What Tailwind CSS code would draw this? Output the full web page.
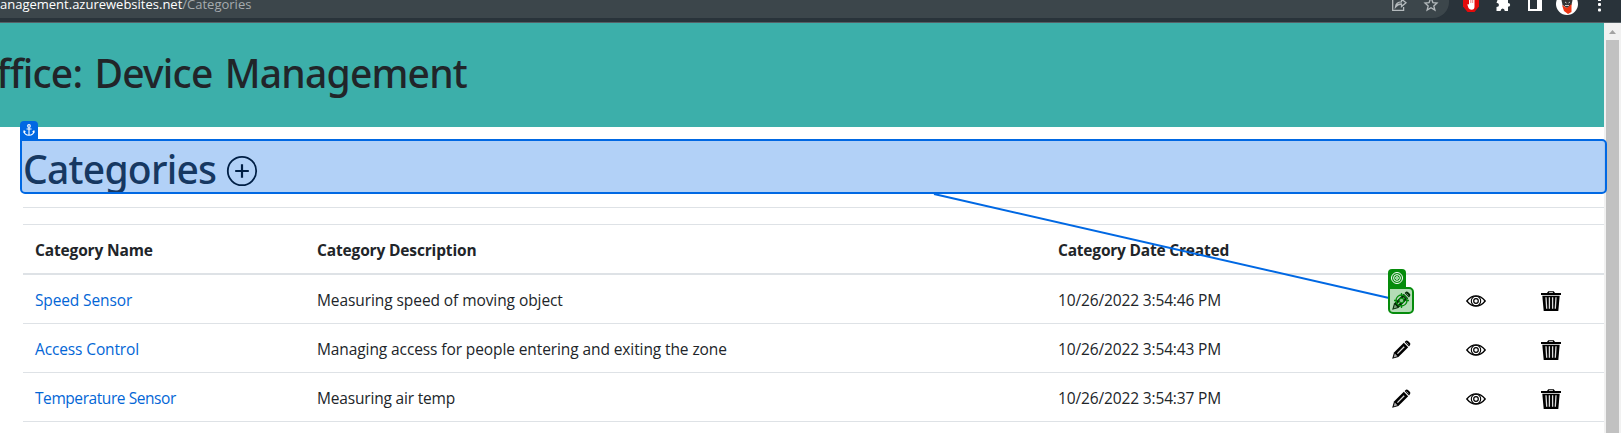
<!DOCTYPE html>
<html lang="en">
<head>
<meta charset="utf-8">
<title>Categories</title>
<script src="https://cdn.jsdelivr.net/npm/@tailwindcss/browser@4"></script>
</head>
<body class="relative h-[433px] w-[1621px] overflow-hidden bg-white font-['Open_Sans',sans-serif] text-[15.5px] leading-6 text-[#212529]">

<svg class="hidden">
  <symbol id="pencil" viewBox="0 0 20 20">
    <path d="M1.2 18.8 3 12.6 12.8 2.8 17.2 7.2 7.4 17Z" fill="#000"/>
    <path d="M13.6 2 15 .8Q16 .2 17 1L19 3Q19.8 4 19 5L18 6.400Z" fill="#000"/>
    <path d="M2.6 17.400 3.800 13.500 6.500 16.200Z" fill="#aaa"/>
    <path d="M6.400 13.600 13.200 6.800" stroke="#ddd" stroke-width="1.300"/>
    <path d="M15.400 2.500 17.500 4.600" stroke="#999" stroke-width="1"/>
  </symbol>
  <symbol id="eye" viewBox="0 0 20 20">
    <g fill="none" stroke="#000">
      <path d="M.8 10Q5 4.800 10 4.800T19.200 10Q15 15.200 10 15.200T.8 10Z" stroke-width="1.300"/>
      <circle cx="10" cy="10" r="4.700" stroke-width="1.100"/>
      <circle cx="10" cy="10" r="2.300" stroke-width="1.200"/>
    </g>
  </symbol>
  <symbol id="trash" viewBox="0 0 20 20">
    <path d="M0 2H6L7.200.2H12.800L14 2H20V4H0Z" fill="#000"/>
    <path d="M7.800 2 8.300 1.300H11.700L12.200 2Z" fill="#fff"/>
    <path d="M1.300 4.800H18.700L17.300 20H2.700Z" fill="#000"/>
    <path d="M5 6.200 5.700 17.800M8.400 6.200V17.800M11.600 6.200V17.800M15 6.200 14.300 17.800" stroke="#ddd" stroke-width="1.300"/>
  </symbol>
</svg>

<!-- browser toolbar -->
<header class="flex h-[23px] items-start border-b border-[#566066] bg-[#29333a]">
  <div class="flex h-[18px] w-[1449px] rounded-br-[16px] bg-[#3c464b]">
    <div class="-mt-[5px] whitespace-nowrap text-[13px] leading-[18px] text-white">anagement.azurewebsites.net<span class="text-[#a5abae]">/Categories</span></div>
    <svg class="ml-auto h-[18px] w-[57px] shrink-0" viewBox="1392 0 57 18" fill="none" stroke="#b4babd" stroke-width="1.300">
      <path d="M1392.700 0V10.400H1403.600V7M1395.500 7Q1396 2 1401.500 1.800V-1L1406 2.800 1401.500 6.500V4Q1398 3.800 1395.500 7Z"/>
      <path d="M1431-2.500 1432.900 2.600 1437 3 1433.800 5.900 1434.900 10.100 1431 7.800 1427.100 10.100 1428.200 5.900 1425 3 1429.100 2.600Z"/>
    </svg>
  </div>
  <svg class="h-[22px] w-[172px]" viewBox="1449 0 172 22">
    <path d="M1463 0H1479V6.500L1474.500 12H1467.500L1463 6.500Z" fill="#e30b0b"/>
    <path d="M1467.300 4.500 1468.500 4 1469 5V0H1474.500V6.500Q1474.500 9.800 1471.500 9.800 1469.500 9.800 1468.500 8Z" fill="#fff"/>
    <path d="M1470.800 0V3M1472.700 0V3" stroke="#e30b0b" stroke-width=".5"/>
    <path d="M1497.500 0H1508V3Q1510.200 3.200 1510.200 5T1508 6.800V11H1504.800Q1504.500 8.500 1502.700 8.500T1500.500 11H1496.500V7Q1499 6.800 1499 5T1496.500 2.700Z" fill="#fff"/>
    <path d="M1528 0H1542V11H1528ZM1530 0V9H1537V0Z" fill="#fff" fill-rule="evenodd"/>
    <circle cx="1567" cy="4" r="11" fill="#fff"/>
    <path d="M1561.500 0H1572.500L1571.500 5 1567 8 1562.500 5Z" fill="#333"/>
    <path d="M1565 2 1566.500 3M1570 2 1568.500 3M1565 5.500H1569" stroke="#ccc" stroke-width="1"/>
    <path d="M1562 5 1567 8 1571.500 4 1571.500 12 1568 14 1564 11Z" fill="#ec3512"/>
    <g fill="#fff"><path d="M1598 0h3v1h-3z"/><rect x="1598" y="3" width="3" height="3" rx="1"/><rect x="1598" y="8.500" width="3" height="3" rx="1"/></g>
  </svg>
</header>

<div class="flex h-[410px]">
  <main class="w-[1604px] shrink-0">
    <div class="h-[104px] overflow-hidden bg-[#3cafaa]">
      <div class="flex h-[100px] w-[467px] items-center justify-end whitespace-nowrap font-['Noto_Sans',sans-serif] text-[39px] font-medium tracking-[-0.8px] [word-spacing:3px]">Office: Device Management</div>
    </div>

    <div class="pl-[23px]">
      <h1 class="mt-3 flex h-[55px] items-center font-['Noto_Sans',sans-serif] text-[39px] font-medium tracking-[-0.75px]">
        <span class="w-[203px] pt-[5px]">Categories</span>
        <svg class="mt-[9px] size-8" viewBox="0 0 32 32" fill="none" stroke="#000"><circle cx="16" cy="16" r="14.200" stroke-width="1.800"/><path d="M9.200 16H22.800M16 9.200V22.800" stroke-width="2.200"/></svg>
      </h1>
      <hr class="mt-[13px] border-[#dee2e6]">
      <div class="mt-4 border-t border-[#dee2e6]">
        <div class="grid h-[50px] grid-cols-[282px_741px_333px_75px_75px_1fr] items-center border-b-2 border-[#dee2e6] pl-3 font-bold tracking-[-0.15px] [&>:not(svg)]:pt-px">
          <div>Category Name</div><div>Category Description</div><div class="tracking-[-0.2px]">Category Date Created</div>
        </div>
        <div class="grid h-[49px] grid-cols-[282px_741px_333px_75px_75px_1fr] items-center border-b border-[#dee2e6] pl-3 [&>:not(svg)]:pt-px">
          <a class="tracking-[-0.13px] text-[#0366d6]">Speed Sensor</a><div class="tracking-[-0.08px]">Measuring speed of moving object</div><div class="tracking-[-0.14px]">10/26/2022 3:54:46 PM</div>
          <svg class="mt-1 size-5"><use href="#pencil"/></svg><svg class="mt-1 size-5"><use href="#eye"/></svg><svg class="mt-1 size-5"><use href="#trash"/></svg>
        </div>
        <div class="grid h-[49px] grid-cols-[282px_741px_333px_75px_75px_1fr] items-center border-b border-[#dee2e6] pl-3 [&>:not(svg)]:pt-px">
          <a class="tracking-[-0.13px] text-[#0366d6]">Access Control</a><div class="tracking-[-0.1px]">Managing access for people entering and exiting the zone</div><div class="tracking-[-0.14px]">10/26/2022 3:54:43 PM</div>
          <svg class="mt-1 size-5"><use href="#pencil"/></svg><svg class="mt-1 size-5"><use href="#eye"/></svg><svg class="mt-1 size-5"><use href="#trash"/></svg>
        </div>
        <div class="grid h-[49px] grid-cols-[282px_741px_333px_75px_75px_1fr] items-center border-b border-[#dee2e6] pl-3 [&>:not(svg)]:pt-px">
          <a class="tracking-[-0.43px] text-[#0366d6]">Temperature Sensor</a><div class="tracking-[-0.18px]">Measuring air temp</div><div class="tracking-[-0.14px]">10/26/2022 3:54:37 PM</div>
          <svg class="mt-1 size-5"><use href="#pencil"/></svg><svg class="mt-1 size-5"><use href="#eye"/></svg><svg class="mt-1 size-5"><use href="#trash"/></svg>
        </div>
      </div>
    </div>
  </main>

  <!-- scrollbar -->
  <aside class="flex h-full w-[17px] flex-col items-center bg-[#f1f1f1]">
    <svg class="h-[17px] w-[17px] shrink-0" viewBox="0 0 17 17"><path d="M5 11 8.500 7 12 11Z" fill="#a3a3a3"/></svg>
    <div class="w-[13px] grow bg-[#c1c1c1]"></div>
  </aside>
</div>

<!-- selection overlays -->
<div class="absolute left-5 top-[139px] h-[55px] w-[1587px] rounded-[5px] rounded-tl-none border-2 border-[#0068e3] bg-[#0068e3]/30"></div>
<div class="absolute left-5 top-[121px] flex h-[19px] w-[18px] justify-center rounded-t-[4px] bg-[#0068e3]">
  <svg class="mt-[3px] h-3 w-3" viewBox="0 0 12 12" fill="none" stroke="#fff" stroke-width="1.100"><circle cx="6" cy="1.900" r="1.300"/><path d="M6 3.200V11.300M3.500 5H8.500M1 7.200Q1.500 11 6 11.300 10.500 11 11 7.200M.6 8.600 1.100 7 2.400 8M11.400 8.600 10.900 7 9.600 8"/></svg>
</div>
<svg class="absolute left-0 top-0 h-[433px] w-[1621px]" fill="none" stroke="#0068e3" stroke-width="2"><path d="M934 194 1389 298"/></svg>
<div class="absolute left-[1388px] top-[287px] flex h-[27px] w-[26px] items-center justify-center rounded-[5px] rounded-tl-none border-2 border-[#068c0c] bg-[#068c0c]/30">
  <svg class="size-[15px]" viewBox="0 0 15 15" fill="none" stroke="#068c0c" stroke-width="1.300"><circle cx="7.500" cy="7.500" r="5.500"/><circle cx="7.500" cy="7.500" r="2.300" fill="#8fc991"/><path d="M7.500 0V3M7.500 12V15M0 7.500H3M12 7.500H15"/></svg>
</div>
<div class="absolute left-[1388px] top-[269px] flex h-[19px] w-[18px] justify-center rounded-t-[4px] bg-[#068c0c]">
  <svg class="mt-[3px] size-3" viewBox="0 0 12 12" fill="none" stroke="#fff" stroke-width="1"><circle cx="6" cy="6" r="5.500"/><circle cx="6" cy="6" r="3.400"/><circle cx="6" cy="6" r="1.300"/></svg>
</div>
</body>
</html>
